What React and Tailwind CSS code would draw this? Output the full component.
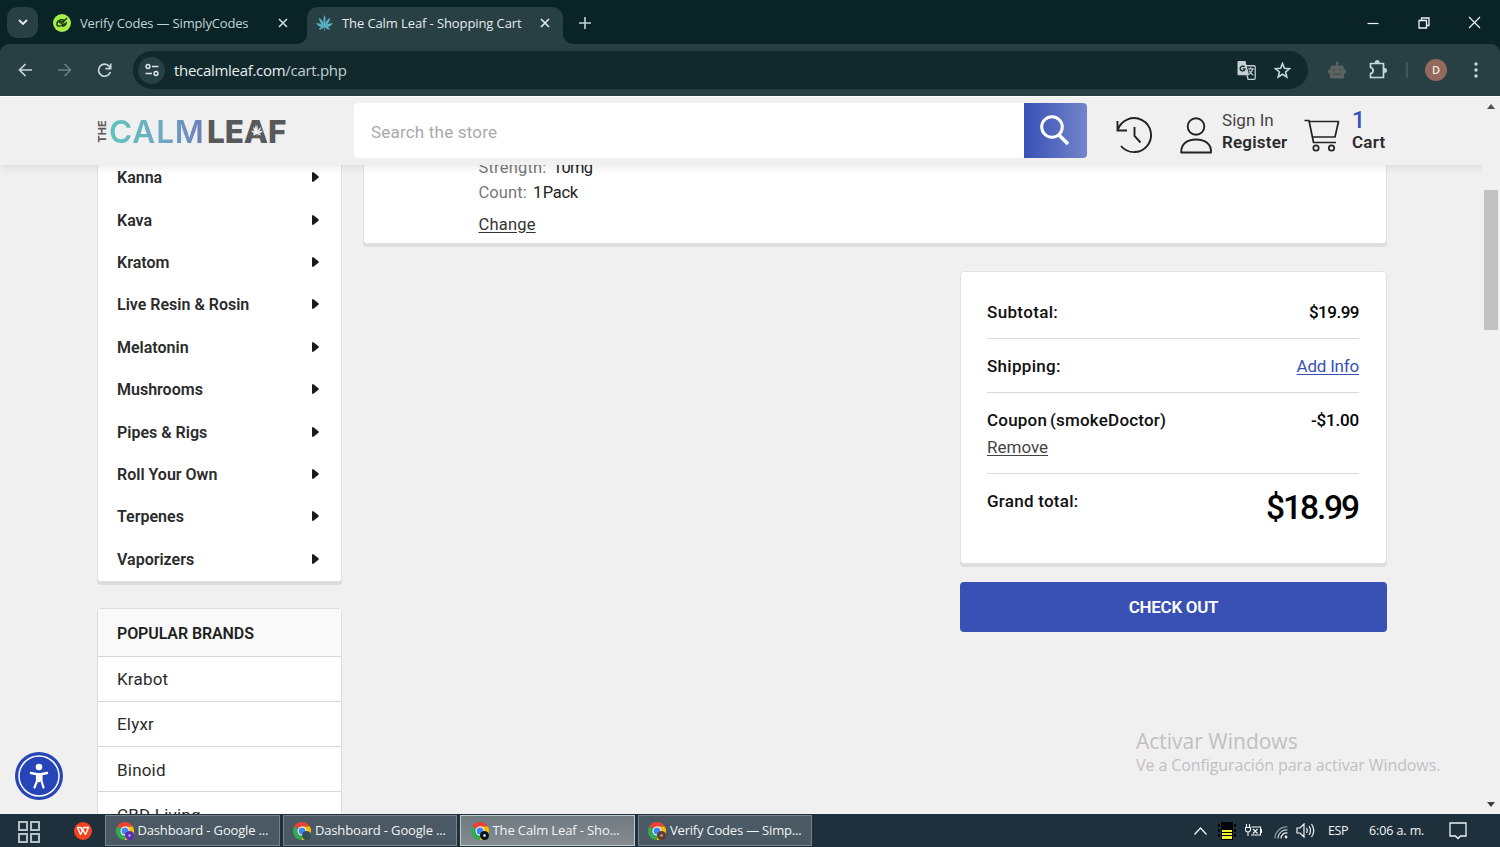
const CATEGORIES = [
  'Kanna',
  'Kava',
  'Kratom',
  'Live Resin & Rosin',
  'Melatonin',
  'Mushrooms',
  'Pipes & Rigs',
  'Roll Your Own',
  'Terpenes',
  'Vaporizers',
];

const BRANDS = ['Krabot', 'Elyxr', 'Binoid', 'CBD Living'];

const TASKS = [
  { title: 'Dashboard - Google ...', badge: '#5b2bb0', dot: '#b9a3e6', spacing: 'tracking-[-0.16px]' },
  { title: 'Dashboard - Google ...', badge: '#33505a', dot: '#33505a', spacing: 'tracking-[-0.16px]' },
  { title: 'The Calm Leaf - Sho...', badge: '#04181c', dot: '#ffffff', active: true, spacing: 'tracking-[-0.12px]' },
  { title: 'Verify Codes — Simp...', badge: '#5f3d36', dot: '#c9aaa2', spacing: 'tracking-[-0.2px]' },
];

function Leaf({ className, fill }) {
  return (
    <svg viewBox="0 0 16 16" className={className} fill={fill}>
      <path d="M8 0C9 2.500 9.500 6 8.300 10.500L7.700 10.500C6.500 6 7 2.500 8 0Z" />
      <path d="M2.600 2.600C5.600 4.400 7.400 7 8 10.800C5 9 3 6 2.600 2.600Z" />
      <path d="M13.400 2.600C10.400 4.400 8.600 7 8 10.800C11 9 13 6 13.400 2.600Z" />
      <path d="M0 7.800C3.500 7.600 6.400 8.600 8 11C4.600 11.700 2 10.600 0 7.800Z" />
      <path d="M16 7.800C12.500 7.600 9.600 8.600 8 11C11.400 11.700 14 10.600 16 7.800Z" />
      <path d="M2.600 13.600C4 11.400 6 10.600 8 10.700C6.800 13 5 14 2.600 13.600Z" />
      <path d="M13.400 13.600C12 11.400 10 10.600 8 10.700C9.200 13 11 14 13.400 13.600Z" />
      <path d="M7.700 10.500h.6v4.500h-.6z" />
    </svg>
  );
}

function CloseX({ className }) {
  return (
    <svg viewBox="0 0 10 10" className={className} fill="none" stroke="currentColor" strokeWidth="1.6">
      <path d="M1 1l8 8M9 1l-8 8" />
    </svg>
  );
}

function TabStrip() {
  return (
    <div className="h-11 shrink-0 flex items-start bg-[#0a2327] text-[#c3d3d5] text-[13px]">
      <div className="ml-[7px] mt-[7px] w-[31px] h-[31px] rounded-[10px] bg-[#283f43] flex items-center justify-center">
        <svg width="10" height="7" viewBox="0 0 10 7" fill="none" stroke="#e3edee" strokeWidth="1.9">
          <path d="M1 1l4 4 4-4" />
        </svg>
      </div>

      <div className="ml-[15px] mt-[7px] w-[240px] h-8 flex items-center">
        <svg width="18" height="18" viewBox="0 0 18 18">
          <circle cx="9" cy="9" r="9" fill="#a6ee4b" />
          <path d="M14 4L9.500 8.800L7.500 9.500M11.500 6.500C9 4.800 5 6 4 8.800C3.200 11.500 5 12.700 7.500 11.800L12 9.500M6 9C7 7.500 9 7.300 10 8M9 12.300C11.500 12 13.300 10.500 13.300 8" fill="none" stroke="#17330f" strokeWidth="1.400" />
        </svg>
        <span className="ml-[9px] pt-px w-[198px] tracking-[-0.17px] whitespace-nowrap">Verify Codes — SimplyCodes</span>
        <CloseX className="w-[10px] h-[10px] shrink-0 text-[#d0dcdd]" />
      </div>

      <div className="relative ml-[14px] mt-[7px] w-[256px] h-[37px] rounded-t-[11px] bg-[#283f43] text-[#e4eced]">
        <svg className="absolute -left-[10px] bottom-0" width="10" height="10" viewBox="0 0 10 10" fill="#283f43">
          <path d="M10 0v10H0A10 10 0 0 0 10 0Z" />
        </svg>
        <svg className="absolute -right-[10px] bottom-0" width="10" height="10" viewBox="0 0 10 10" fill="#283f43">
          <path d="M0 0v10h10A10 10 0 0 1 0 0Z" />
        </svg>
        <div className="h-8 flex items-center pl-[9px]">
          <Leaf className="w-[17px] h-[17px] shrink-0" fill="#5fb3c6" />
          <span className="ml-[9px] pt-px w-[198px] tracking-[-0.1px] whitespace-nowrap">The Calm Leaf - Shopping Cart</span>
          <CloseX className="w-[10px] h-[10px] shrink-0" />
        </div>
      </div>

      <svg className="ml-[16px] mt-[17px]" width="12" height="12" viewBox="0 0 12 12" stroke="#c3d3d5" strokeWidth="1.600">
        <path d="M6 0v12M0 6h12" />
      </svg>

      <div className="ml-auto mr-[19px] mt-[16px] flex items-center text-[#eef3f3]">
        <svg width="12" height="12" viewBox="0 0 12 12" stroke="currentColor" strokeWidth="1.200">
          <path d="M0.500 6.500h11" />
        </svg>
        <svg className="ml-[39px]" width="12" height="12" viewBox="0 0 12 12" fill="none" stroke="currentColor" strokeWidth="1.300">
          <path d="M1 3.500h7.500v7.500H1zM3.500 3.500V1H11v7.500H8.500" />
        </svg>
        <svg className="ml-[38px]" width="13" height="13" viewBox="0 0 13 13" stroke="currentColor" strokeWidth="1.200">
          <path d="M1 1l11 11M12 1L1 12" />
        </svg>
      </div>
    </div>
  );
}

function Toolbar() {
  return (
    <div className="h-[52px] shrink-0 bg-[#0a2327]">
      <div className="h-full flex items-center rounded-t-[9px] bg-[#283f43] text-[#c7d6d8]">
        <svg className="ml-[18px]" width="14" height="14" viewBox="0 0 14 14" fill="none" stroke="currentColor" strokeWidth="1.700">
          <path d="M14 7H1.500M7.500 1L1.500 7l6 6" />
        </svg>
        <svg className="ml-[26px]" width="14" height="14" viewBox="0 0 14 14" fill="none" stroke="#6c7f83" strokeWidth="1.700">
          <path d="M0 7h12.500M6.500 1l6 6-6 6" />
        </svg>
        <svg className="ml-[25px]" width="15" height="15" viewBox="0 0 15 15" fill="none" stroke="currentColor" strokeWidth="1.700">
          <path d="M13.300 9A6 6 0 1 1 12.300 3.500L13.700 5.500M13.700 0.500v5.200H8.500" />
        </svg>

        <div className="ml-[21px] w-[1175px] h-[38px] rounded-full bg-[#11282c] flex items-center">
          <div className="ml-[5px] w-[27px] h-[27px] rounded-full bg-[#283f43] flex items-center justify-center">
            <svg width="14" height="14" viewBox="0 0 14 14" fill="none" stroke="#dce7e8" strokeWidth="1.500">
              <circle cx="3" cy="3.500" r="1.900" />
              <path d="M7 3.500h6.500M0.500 10.500H7" />
              <circle cx="11" cy="10.500" r="1.900" />
            </svg>
          </div>
          <span className="ml-[9px] text-[15px] tracking-[-0.3px] text-[#e6efef] whitespace-nowrap">
            thecalmleaf.com<span className="text-[#c2d0d2]">/cart.php</span>
          </span>
          <svg className="ml-auto" width="19" height="19" viewBox="0 0 18 18">
            <path d="M1 0h7l3.500 13.500H1.500A1 1 0 0 1 0.500 12.500V1Z" fill="#c3d0d2" />
            <path d="M8.500 4.500H16a1.300 1.300 0 0 1 1.300 1.300V16a1.300 1.300 0 0 1-1.300 1.300h-5.500L9.500 13.500" fill="none" stroke="#c3d0d2" strokeWidth="1.200" />
            <path d="M7 5.500A2.300 2.300 0 1 0 7.600 7.500H5.500" fill="none" stroke="#11282c" strokeWidth="1.300" />
            <path d="M10.500 7.500h5.500M13 6v1.500M15 7.500C14.500 10 13 11.500 11.500 12.500M11.500 9C12.500 11 14 12.500 15.500 13.500" fill="none" stroke="#c3d0d2" strokeWidth="1.100" />
          </svg>
          <svg className="ml-[18px] mr-[17px]" width="17" height="17" viewBox="0 0 17 17" fill="none" stroke="#c7d6d8" strokeWidth="1.600" strokeLinejoin="miter">
            <path d="M8.500 1.500L10.400 6.300L15.500 6.700L11.600 10L12.800 15L8.500 12.300L4.200 15L5.400 10L1.500 6.700L6.600 6.300Z" />
          </svg>
        </div>

        <svg className="ml-[20px]" width="18" height="18" viewBox="0 0 18 18" fill="#5d6363">
          <circle cx="9" cy="2" r="1.500" />
          <path d="M8.300 2h1.400v3H8.300zM4 4.500h10a1.500 1.500 0 0 1 1.500 1.500v2.500H17a1 1 0 0 1 1 1v2a1 1 0 0 1-1 1h-1V16a1.500 1.500 0 0 1-1.500 1.500h-11A1.500 1.500 0 0 1 2 16v-3.500H1a1 1 0 0 1-1-1v-2a1 1 0 0 1 1-1h1.500V6A1.500 1.500 0 0 1 4 4.500Z" />
          <path d="M5 8h2v1.500H5zM11 8h2v1.500h-2zM5 12.500h8V14H5z" fill="#414f51" />
        </svg>
        <svg className="ml-[23px] -mt-[2px]" width="19" height="19" viewBox="0 0 19 19" fill="none" stroke="#c7dadc" strokeWidth="1.700" strokeLinejoin="round">
          <path d="M1.500 3.500H14.500V17.500H1.500V13.500C5 13 5 8 1.500 7.500Z" />
          <path d="M6 2.600a2.200 2.200 0 0 1 4.400 0ZM15.500 8.200a2.200 2.200 0 0 1 0 4.400Z" fill="#c7dadc" strokeWidth="0.800" />
        </svg>
        <div className="ml-[18px] w-[2px] h-4 bg-[#43575b]" />
        <div className="ml-[17px] w-[22px] h-[22px] rounded-full bg-[#94695e] flex items-center justify-center text-[11px] font-semibold text-[#f3e8e4]">
          D
        </div>
        <svg className="ml-[27px]" width="4" height="16" viewBox="0 0 4 16" fill="#c7dadc">
          <circle cx="2" cy="2" r="1.700" />
          <circle cx="2" cy="8" r="1.700" />
          <circle cx="2" cy="14" r="1.700" />
        </svg>
      </div>
    </div>
  );
}

function Logo() {
  return (
    <div className="relative ml-[97px] mt-px w-[192px] h-[30px] flex items-center font-['Inter'] leading-none">
      <div className="w-[10px] h-[24px] flex items-center justify-center">
        <span className="-rotate-90 text-[11px] font-bold text-[#58595b] tracking-[0.1px]">THE</span>
      </div>
      <span className="ml-[2px] w-[98px] text-[31.500px] font-semibold tracking-[0.9px] bg-linear-to-r from-[#5ec3bd] via-[#6cabc4] to-[#6c7db8] bg-clip-text text-transparent">
        CALM
      </span>
      <span className="text-[31.500px] font-extrabold tracking-[-0.1px] text-[#58595b]">LEAF</span>
      <Leaf className="absolute left-[154px] top-[8px] w-[12px] h-[12px]" fill="#f0f0f0" />
    </div>
  );
}

function StoreHeader() {
  return (
    <header className="relative z-10 h-[69px] shrink-0 flex items-center bg-[#f0f0f0] border-t border-white shadow-[0_2px_10px_rgba(0,0,0,0.09)]">
      <Logo />
      <div className="ml-[65px] mb-[2px] w-[733px] h-[55px] flex rounded-[4px] overflow-hidden bg-white">
        <span className="flex-1 pl-[17px] leading-[59px] text-[17px] tracking-[0.2px] text-[#a9a9a9]">Search the store</span>
        <div className="w-[63px] bg-linear-to-r from-[#3951b5] to-[#7384ca] flex items-center justify-center">
          <svg className="-ml-[3px]" width="30" height="32" viewBox="0 0 30 32" fill="none" stroke="#fff" strokeWidth="3">
            <circle cx="13" cy="13" r="10.300" />
            <path d="M19.500 20.500L29 30" strokeWidth="3.500" />
          </svg>
        </div>
      </div>

      <svg className="ml-[29px] mt-[8px]" width="37" height="37" viewBox="0 0 37 37" fill="none" stroke="#222" strokeWidth="1.900">
        <path d="M1.500 4v9.500h9.500M1.800 13A17 17 0 1 1 5 29" />
        <path d="M18.500 10v9l6 6.500" />
      </svg>

      <svg className="ml-[27px] mt-[8px]" width="33" height="37" viewBox="0 0 33 37" fill="none" stroke="#222" strokeWidth="1.900">
        <circle cx="16" cy="9.500" r="8.300" />
        <path d="M1.200 35.500C1 27 7 22.500 16 22.500S31.500 27 31 35.500Z" strokeLinejoin="round" />
      </svg>
      <div className="ml-[9px] w-[82px] text-[17px] leading-[22px] whitespace-nowrap">
        <div className="text-[#444] tracking-[0.05px]">Sign In</div>
        <div className="font-semibold tracking-[0.2px] text-[#2b2b2b]">Register</div>
      </div>

      <svg className="mt-[8px]" width="36" height="33" viewBox="0 0 36 33" fill="none" stroke="#222" strokeWidth="1.700" strokeLinejoin="round">
        <path d="M0.500 1.500H5L9.500 23.500H32M5.500 2.500H34.500L31 18H8.500" />
        <circle cx="12" cy="29" r="2.700" />
        <circle cx="27.500" cy="29" r="2.700" />
      </svg>
      <div className="ml-[12px] leading-[22px]">
        <div className="pt-px h-[22px] text-[23px] font-medium text-[#3951b5]">1</div>
        <div className="text-[17px] font-semibold tracking-[0.2px] text-[#2b2b2b]">Cart</div>
      </div>
    </header>
  );
}

function Sidebar() {
  return (
    <aside className="w-[245px] shrink-0">
      <ul className="-mt-[8px] bg-white border border-t-0 border-[#e2e2e2] rounded-b-[4px] shadow-[0_3px_0_#dcdcdc]">
        {CATEGORIES.map((name) => (
          <li key={name} className="h-[42.400px] pl-[19px] pr-[22px] flex items-center justify-between text-[16px] font-semibold text-[#2b2b2b]">
            {name}
            <svg className="-mt-[2px]" width="7" height="10" viewBox="0 0 7 10" fill="#1b1b1b">
              <path d="M0 0.500Q0 0 1.500 0.300L6.500 4.200Q7 5 6.500 5.800L1.500 9.700Q0 10 0 9.500Z" />
            </svg>
          </li>
        ))}
      </ul>

      <div className="mt-[26px] bg-white border border-[#dedede] rounded-t-[4px]">
        <h2 className="h-[47px] pl-[19px] leading-[49px] bg-[#f9f9f9] text-[16px] font-semibold tracking-[-0.1px] text-[#1f1f1f] whitespace-nowrap">
          POPULAR BRANDS
        </h2>
        {BRANDS.map((name) => (
          <div key={name} className="h-[45.200px] pl-[19px] pt-[2px] flex items-center border-t border-[#d6d6d6] text-[17px] tracking-[0.2px] text-[#2b2b2b]">
            {name}
          </div>
        ))}
      </div>
    </aside>
  );
}

function CartItem() {
  return (
    <div className="-ml-[0.500px] h-[79px] flex flex-col pl-[115px] bg-white border border-t-0 border-[#e2e2e2] rounded-b-[4px] shadow-[0_3px_0_#dcdcdc] text-[16.500px] overflow-y-clip overflow-x-visible">
      <div className="-mt-[10px] h-[25px] leading-[25px] text-[#777] tracking-[0.2px]">
        Strength: <span className="ml-[2px] tracking-[-0.7px] text-[#222]">10mg</span>
      </div>
      <div className="h-[25px] leading-[25px] text-[#777] tracking-[0.1px]">
        Count: <span className="ml-[2px] tracking-[-0.3px] [word-spacing:-3px] text-[#222]">1 Pack</span>
      </div>
      <div className="mt-[7px] leading-[25px] tracking-[0.2px] text-[#333] underline underline-offset-2">Change</div>
    </div>
  );
}

function Totals() {
  return (
    <div className="ml-auto mt-[27px] w-[427px]">
      <div className="h-[293px] pl-[26px] pr-[27px] pt-[13px] bg-white border border-[#e2e2e2] rounded-[4px] shadow-[0_3px_0_#dcdcdc] text-[17px] font-medium text-[#111]">
        <div className="h-[54px] pt-[2px] flex items-center justify-between border-b border-[#d9d9d9]">
          <span className="tracking-[0.350px]">Subtotal:</span>
          <span className="tracking-[-0.500px] text-black">$19.99</span>
        </div>
        <div className="h-[54px] pt-[2px] flex items-center justify-between border-b border-[#d9d9d9]">
          <span className="tracking-[0.300px]">Shipping:</span>
          <span className="font-normal tracking-[-0.200px] text-[#3951b5] underline underline-offset-2">Add Info</span>
        </div>
        <div className="h-[81px] pt-[14px] border-b border-[#d9d9d9] leading-[27px]">
          <div className="flex justify-between">
            <span className="tracking-[0.200px] [word-spacing:-1.500px]">Coupon (smokeDoctor)</span>
            <span className="tracking-[-0.200px] text-black">-$1.00</span>
          </div>
          <span className="font-normal text-[#444] underline underline-offset-2">Remove</span>
        </div>
        <div className="pt-[14px] flex justify-between leading-[27px]">
          <span className="tracking-[0.250px]">Grand total:</span>
          <span className="mr-px text-[33.500px] tracking-[-2.100px] leading-[40px] text-black">$18.99</span>
        </div>
      </div>
      <button className="mt-[18px] pt-[2px] w-full h-[50px] rounded-[4px] bg-[#3951b5] text-white text-[17px] font-semibold tracking-[-0.300px]">CHECK OUT</button>
    </div>
  );
}

function Scrollbar() {
  return (
    <div className="absolute right-0 top-px bottom-0 z-20 w-[18px] bg-[#f0f0f0] flex flex-col items-center">
      <svg className="mt-[7px]" width="8" height="5" viewBox="0 0 8 5" fill="#505050">
        <path d="M4 0l4 5H0z" />
      </svg>
      <div className="mt-[81px] w-[14px] h-[140px] bg-[#c1c1c1]" />
      <svg className="mt-auto mb-[7px]" width="8" height="5" viewBox="0 0 8 5" fill="#404040">
        <path d="M0 0h8L4 5z" />
      </svg>
    </div>
  );
}

function ChromeIcon({ badge, dot }) {
  return (
    <svg className="shrink-0" width="18" height="18" viewBox="0 0 18 18">
      <path d="M9 9L1.200 4.500A9 9 0 0 1 16.800 4.500H9Z" fill="#ea4335" />
      <path d="M9 9V4.500H16.800A9 9 0 0 1 9 18Z" fill="#fbbc05" />
      <path d="M9 9L9 18A9 9 0 0 1 1.200 4.500Z" fill="#34a853" />
      <circle cx="9" cy="9" r="4.500" fill="#fff" />
      <circle cx="9" cy="9" r="3.500" fill="#4285f4" />
      <circle cx="13.500" cy="13.500" r="4.500" fill={badge} />
      <circle cx="13.500" cy="13.500" r="1.300" fill={dot} />
    </svg>
  );
}

function Taskbar() {
  return (
    <div className="h-[33px] shrink-0 flex items-center bg-[#1f303d] text-[#f1f4f5] text-[13px]">
      <svg className="ml-[18px] mt-[2px]" width="22" height="22" viewBox="0 0 22 22" fill="none" stroke="#b6bfc4" strokeWidth="2">
        <path d="M1 1h8v8H1zM13 1h8v8h-8zM1 13h8v8H1zM13 13h8v8h-8z" />
      </svg>
      <svg className="ml-[34px]" width="18" height="18" viewBox="0 0 18 18">
        <circle cx="9" cy="9" r="9" fill="#f4421f" />
        <path d="M3.500 5.500H7L8.200 9L9.500 5.500H14.500L11.500 12.500L9 8L6.500 12.500Z" fill="none" stroke="#fff" strokeWidth="1.400" strokeLinejoin="round" />
      </svg>
      <div className="ml-[13px] flex gap-[3px] h-[32px] mt-px">
        {TASKS.map((task, i) => (
          <div
            key={i}
            className={`w-[174.500px] h-[31px] pl-[9.500px] flex items-center border whitespace-nowrap ${
              task.active ? 'border-[#c3c8cb] bg-linear-to-b from-[#6f797f] to-[#858d92]' : 'border-[#75828a] bg-[#4a5963]'
            }`}
          >
            <ChromeIcon badge={task.badge} dot={task.dot} />
            <span className={`ml-[4px] pt-px ${task.spacing}`}>{task.title}</span>
          </div>
        ))}
      </div>

      <div className="ml-auto flex items-center mr-[33px]">
        <svg width="13" height="8" viewBox="0 0 13 8" fill="none" stroke="currentColor" strokeWidth="1.300">
          <path d="M0.500 7.500l6-6.500 6 6.500" />
        </svg>
        <svg className="ml-[11px]" width="18" height="18" viewBox="0 0 18 18">
          <path d="M3 0h12v18H3z" fill="#050505" />
          <path d="M0 2h2v3H0zM0 7h2v3H0zM0 12h2v3H0zM16 2h2v3h-2zM16 7h2v3h-2zM16 12h2v3h-2z" fill="#050505" />
          <path d="M4 8h10v2H4zM4 11h10v2H4zM4 14h10v3H4z" fill="#f2ee33" />
        </svg>
        <svg className="ml-[9px]" width="17" height="13" viewBox="0 0 17 13" fill="none" stroke="currentColor" strokeWidth="1.100">
          <path d="M1.500 0v3M4.500 0v3M0.500 3.500h5v2a2.500 2.500 0 0 1-5 0zM3 8v4M6.500 3h9v8H6M16.500 5v4M8 5l4.500 4.500M12.500 5L8 9.500" />
        </svg>
        <svg className="ml-[12px] mt-[3px]" width="14" height="13" viewBox="0 0 14 13" fill="none" strokeWidth="1.200">
          <path d="M1 12.500A11.500 11.500 0 0 1 13.500 1" stroke="#8c979e" />
          <path d="M4 12.500A8.500 8.500 0 0 1 13.500 4" stroke="#c2c9cd" />
          <path d="M7 12.500A5.500 5.500 0 0 1 13.500 7" stroke="#f1f4f5" />
          <circle cx="12" cy="11" r="1.400" fill="#f1f4f5" />
        </svg>
        <svg className="ml-[8px]" width="19" height="15" viewBox="0 0 19 15" fill="none" stroke="currentColor" strokeWidth="1.200">
          <path d="M1 5h3l4-4v13l-4-4H1zM10.500 5Q12 7.500 10.500 10M13 3Q16 7.500 13 12M15.500 1Q20 7.500 15.500 14" />
        </svg>
        <span className="ml-[13px] pt-px w-[41px] text-[12.500px] tracking-[-0.400px]">ESP</span>
        <span className="w-[80px] pt-px text-[12.500px] tracking-[-0.100px] whitespace-nowrap">6:06 a. m.</span>
        <svg width="18" height="18" viewBox="0 0 18 18" fill="none" stroke="currentColor" strokeWidth="1.300">
          <path d="M1 1h16v13h-5.500L9 16.500L6.500 14H1z" />
        </svg>
      </div>
    </div>
  );
}

export default function App() {
  return (
    <div className="w-[1500px] h-[847px] flex flex-col overflow-hidden font-['Open_Sans',sans-serif]">
      <TabStrip />
      <Toolbar />

      <div className="relative flex-1 min-h-0 flex flex-col overflow-hidden bg-[#f0f0f0] font-['Roboto',sans-serif]">
        <StoreHeader />
        <div className="flex-1 min-h-0 pl-[97px] flex gap-[21px]">
          <Sidebar />
          <main className="w-[1024px]">
            <CartItem />
            <Totals />
          </main>
        </div>
        <Scrollbar />

        {/* Accessibility widget */}
        <div className="absolute left-[15px] top-[656px] z-20">
          <svg width="48" height="48" viewBox="0 0 48 48">
            <circle cx="24" cy="24" r="24" fill="#2645b8" />
            <circle cx="24" cy="24" r="20" fill="none" stroke="#fff" strokeWidth="1.500" />
            <circle cx="24" cy="15" r="3.300" fill="#fff" />
            <path d="M16 21L22 22.300H26L32 21M24 23v6" fill="none" stroke="#fff" strokeWidth="2.500" strokeLinecap="round" />
            <path d="M22 22h4.500v7l2 6.500M22 22v7l-2.500 6.500" fill="none" stroke="#fff" strokeWidth="2.200" strokeLinecap="round" />
            <path d="M21 22h6v7h-6z" fill="#fff" />
          </svg>
        </div>

        {/* Windows activation watermark */}
        <div className="absolute left-[1136px] top-[629px] font-['Open_Sans'] text-[#c0c0c0] whitespace-nowrap">
          <div className="text-[21px] leading-[32px]">Activar Windows</div>
          <div className="text-[16px] leading-[17px] tracking-[-0.100px]">Ve a Configuración para activar Windows.</div>
        </div>
      </div>

      <Taskbar />
    </div>
  );
}
